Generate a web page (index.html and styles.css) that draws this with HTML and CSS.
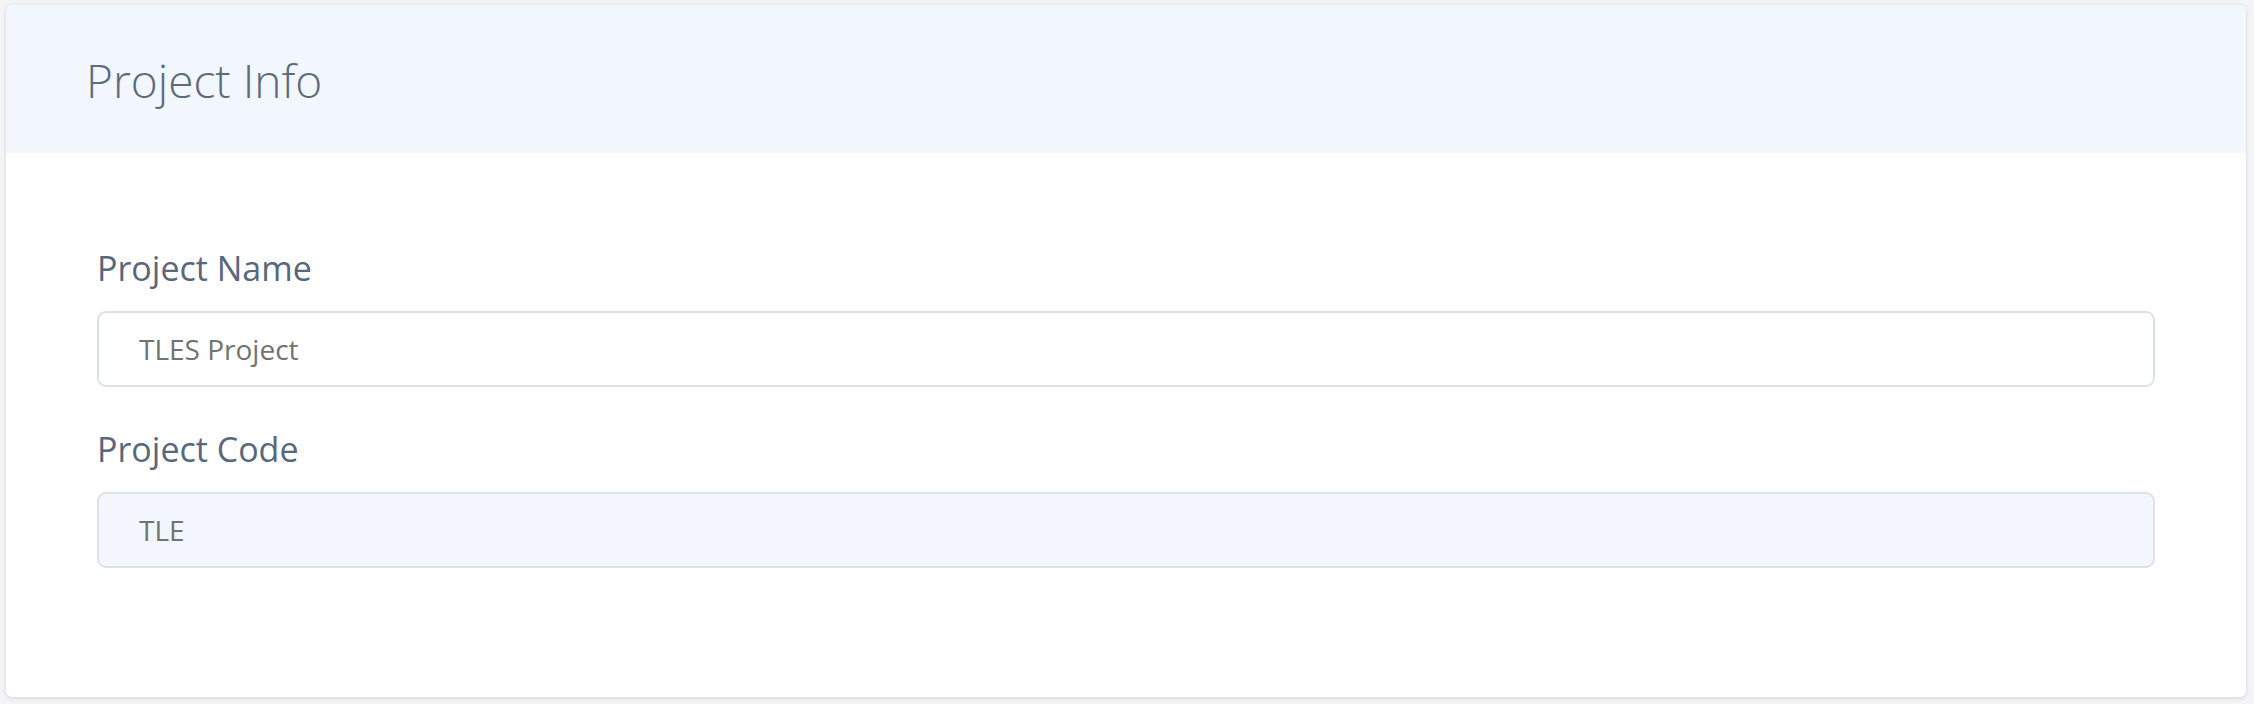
FILE: index.html
```html
<!DOCTYPE html>
<html>
<head>
<meta charset="utf-8">
<link rel="stylesheet" href="styles.css">
</head>
<body>
<section class="card">
  <header class="card-header">
    <h1 class="card-title">Project Info</h1>
  </header>
  <div class="card-body">
    <div class="field">
      <label class="field-label" for="pname">Project Name</label>
      <input class="field-input" id="pname" type="text" value="TLES Project">
    </div>
    <div class="field">
      <label class="field-label" for="pcode">Project Code</label>
      <input class="field-input field-input--disabled" id="pcode" type="text" value="TLE" disabled>
    </div>
  </div>
</section>
</body>
</html>
```

FILE: styles.css
```css
html, body {
  margin: 0;
  padding: 0;
  background: #f4f4f6;
  height: 704px;
  overflow: hidden;
}
body {
  padding: 5px 8px 7px 6px;
  box-sizing: border-box;
  font-family: "Open Sans", "Noto Sans", sans-serif;
}
.card {
  background: #ffffff;
  border-radius: 6px;
  height: 692px;
  box-shadow: 0 1px 4px rgba(60, 70, 90, 0.18);
  overflow: hidden;
  display: flex;
  flex-direction: column;
}
.card-header {
  background: #f2f6fd;
  height: 148px;
  display: flex;
  align-items: center;
  padding-left: 80px;
  flex-shrink: 0;
}
.card-title {
  margin: 0;
  font-weight: 300;
  font-size: 46px;
  color: #5b6a7d;
  line-height: 1;
  padding-top: 2px;
}
.card-body {
  padding: 95px 91px 0 91px;
  display: flex;
  flex-direction: column;
  gap: 42px;
}
.field {
  display: flex;
  flex-direction: column;
  gap: 23px;
}
.field-label {
  font-size: 34px;
  color: #58677b;
  line-height: 40px;
}
.field-input {
  font-family: "Open Sans", "Noto Sans", sans-serif;
  height: 76px;
  box-sizing: border-box;
  border: 2px solid #dfe1e8;
  border-radius: 9px;
  background: #ffffff;
  padding: 0 40px;
  font-size: 28px;
  color: #727272;
  outline: none;
}
.field-input--disabled {
  background: #f3f6fd;
  color: #727272;
}
```
